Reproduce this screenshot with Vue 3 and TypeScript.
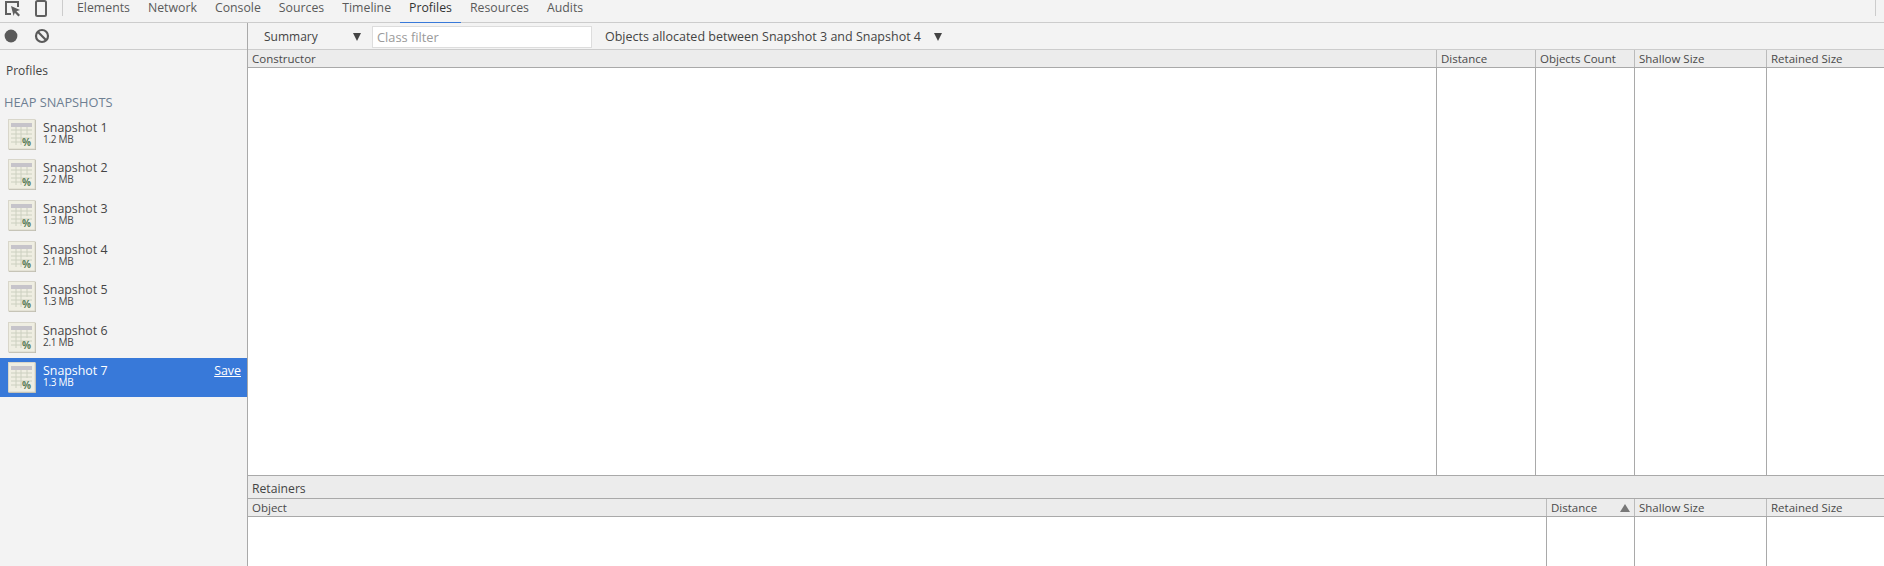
<script setup lang="ts">
const tabs: string[] = ['Elements', 'Network', 'Console', 'Sources', 'Timeline', 'Profiles', 'Resources', 'Audits']
const snapshots = [
  { name: 'Snapshot 1', size: '1.2 MB' },
  { name: 'Snapshot 2', size: '2.2 MB' },
  { name: 'Snapshot 3', size: '1.3 MB' },
  { name: 'Snapshot 4', size: '2.1 MB' },
  { name: 'Snapshot 5', size: '1.3 MB' },
  { name: 'Snapshot 6', size: '2.1 MB' },
  { name: 'Snapshot 7', size: '1.3 MB' },
]
const upperCols: string[] = ['Constructor', 'Distance', 'Objects Count', 'Shallow Size', 'Retained Size']
const lowerCols: string[] = ['Object', 'Distance', 'Shallow Size', 'Retained Size']
</script>

<template>
  <div class="root">
    <header class="topbar">
      <svg class="ico-inspect" width="18" height="18" viewBox="0 0 18 18">
        <path d="M7 14H2V2h12v5" fill="none" stroke="#5f5f5f" stroke-width="2" />
        <path d="M7 6l9 4-3.6 1.2L16 15l-1.6 1.6-3.6-3.8L9.6 16z" fill="#5f5f5f" />
      </svg>
      <svg class="ico-device" width="12" height="17" viewBox="0 0 12 17">
        <rect x="1" y="1" width="10" height="15" rx="1.5" fill="none" stroke="#5f5f5f" stroke-width="2" />
      </svg>
      <span class="vsep"></span>
      <nav class="tabs">
        <span v-for="t in tabs" :key="t" class="tab" :class="{ active: t === 'Profiles' }">{{ t }}</span>
      </nav>
      <span class="end-sep"></span>
    </header>

    <div class="main">
      <aside class="sidebar">
        <div class="side-tools">
          <svg width="14" height="14" viewBox="0 0 14 14"><circle cx="7" cy="7" r="6.4" fill="#5a5a5a" /></svg>
          <svg width="16" height="16" viewBox="0 0 16 16">
            <circle cx="8" cy="8" r="6" fill="none" stroke="#5a5a5a" stroke-width="2.2" />
            <path d="M3.8 3.8l8.4 8.4" stroke="#5a5a5a" stroke-width="2.2" />
          </svg>
        </div>
        <div class="side-title">Profiles</div>
        <div class="side-group">HEAP SNAPSHOTS</div>
        <ul class="snap-list">
          <li v-for="(s, i) in snapshots" :key="s.name" class="snap" :class="{ selected: i === 6 }">
            <svg class="snap-ico" width="28" height="31" viewBox="0 0 28 31">
              <rect x="1" y="1" width="27" height="30" fill="#b5b3a4" />
              <rect x="0.5" y="0.5" width="26.5" height="29.5" fill="#efeee2" stroke="#d8d6ca" />
              <rect x="3" y="4" width="21" height="4" fill="#c6c4ca" />
              <path d="M3 11h21M3 15h21M3 19h21M3 23h11M8 8v18M13 8v18M19 8v8" stroke="#ccd0c0" stroke-width="1" fill="none" />
              <text x="14" y="27" class="pct">%</text>
            </svg>
            <div class="snap-text">
              <div class="snap-name">{{ s.name }}</div>
              <div class="snap-size">{{ s.size }}</div>
            </div>
            <span v-if="i === 6" class="save">Save</span>
          </li>
        </ul>
      </aside>

      <section class="content">
        <div class="filterbar">
          <span class="summary">Summary</span>
          <span class="tri"></span>
          <span class="filter">Class filter</span>
          <span class="objects">Objects allocated between Snapshot 3 and Snapshot 4</span>
          <span class="tri tri2"></span>
        </div>

        <div class="grid upper">
          <div class="row-head cols-upper">
            <span v-for="c in upperCols" :key="c" class="head-cell">{{ c }}</span>
          </div>
          <div class="row-body cols-upper">
            <span v-for="c in upperCols" :key="c" class="body-cell"></span>
          </div>
        </div>

        <div class="retainers">Retainers</div>

        <div class="grid lower">
          <div class="row-head cols-lower">
            <span v-for="c in lowerCols" :key="c" class="head-cell">
              {{ c }}
              <span v-if="c === 'Distance'" class="sort"></span>
            </span>
          </div>
          <div class="row-body cols-lower">
            <span v-for="c in lowerCols" :key="c" class="body-cell"></span>
          </div>
        </div>
      </section>
    </div>
  </div>
</template>

<style scoped>
.root {
  width: 1884px;
  height: 566px;
  overflow: hidden;
  display: flex;
  flex-direction: column;
  background: #f3f3f3;
  color: #444;
  font-family: "Open Sans", "Noto Sans", sans-serif;
  font-size: 12px;
  line-height: 16px;
}
.topbar {
  height: 23px;
  flex: none;
  box-sizing: border-box;
  border-bottom: 1px solid #ccc;
  display: flex;
  align-items: flex-start;
  position: relative;
}
.ico-inspect { margin: 0 0 0 4px; }
.ico-device { margin: 0 0 0 13px; }
.vsep {
  width: 1px;
  height: 16px;
  margin-left: 15px;
  background: #ccc;
}
.tabs {
  display: flex;
  margin-left: 5px;
  height: 22px;
  color: #5a5a5a;
  font-size: 12.3px;
}
.tab {
  padding: 0 9px;
  height: 23px;
  box-sizing: border-box;
  white-space: nowrap;
}
.tab.active {
  color: #333;
  border-bottom: 1px solid #3879d9;
}
.end-sep {
  position: absolute;
  left: 1875px;
  top: 0;
  width: 1px;
  height: 16px;
  background: #ccc;
}
.main {
  flex: 1;
  display: flex;
  min-height: 0;
}
.sidebar {
  width: 248px;
  flex: none;
  box-sizing: border-box;
  border-right: 1px solid #a9a9a9;
}
.side-tools {
  height: 27px;
  box-sizing: border-box;
  border-bottom: 1px solid #ccc;
  display: flex;
  align-items: center;
  gap: 16px;
  padding-left: 4px;
}
.side-title {
  padding: 13px 0 0 6px;
  height: 22px;
  color: #444;
}
.side-group {
  padding: 9px 0 0 4px;
  height: 17px;
  color: #6e7f92;
  font-size: 12.8px;
}
.snap-list {
  list-style: none;
  margin: 3px 0 0;
  padding: 0;
}
.snap {
  height: 40.67px;
  display: flex;
  align-items: center;
  padding: 0 6px 0 8px;
  box-sizing: border-box;
}
.snap.selected {
  height: 39px;
  background: #3879d9;
  color: #fff;
}
.snap-ico { flex: none; }
.pct {
  font-size: 10px;
  font-weight: 700;
  fill: #5b7f5a;
}
.snap-text {
  margin-left: 7px;
  flex: 1;
  margin-top: -4px;
}
.snap-name {
  font-size: 12.4px;
  line-height: 13px;
}
.snap-size {
  font-size: 10px;
  line-height: 10px;
  letter-spacing: -0.3px;
}
.save {
  align-self: flex-start;
  margin-top: 5px;
  font-size: 12.4px;
  text-decoration: underline;
}
.content {
  flex: 1;
  min-width: 0;
  display: flex;
  flex-direction: column;
}
.filterbar {
  height: 27px;
  flex: none;
  box-sizing: border-box;
  border-bottom: 1px solid #ccc;
  display: flex;
  align-items: center;
  padding-top: 2px;
  position: relative;
}
.summary { margin-left: 16px; width: 89px; }
.tri {
  width: 0;
  height: 0;
  border-left: 4.5px solid transparent;
  border-right: 4.5px solid transparent;
  border-top: 8px solid #444;
}
.filter {
  margin-left: 11px;
  width: 220px;
  height: 22px;
  box-sizing: border-box;
  background: #fff;
  border: 1px solid #ddd;
  padding: 2px 4px;
  color: #9a9a9a;
  font-size: 12.8px;
}
.objects {
  margin-left: 13px;
  white-space: nowrap;
  font-size: 12.5px;
}
.tri2 { margin-left: 13px; }
.grid {
  display: flex;
  flex-direction: column;
  background: #fff;
  min-height: 0;
}
.upper { height: 425px; flex: none; }
.lower { flex: 1; }
.cols-upper {
  display: grid;
  grid-template-columns: 1189px 99px 99px 132px 1fr;
}
.cols-lower {
  display: grid;
  grid-template-columns: 1299px 88px 132px 1fr;
}
.row-head {
  height: 18px;
  flex: none;
  box-sizing: border-box;
  background: #ececec;
  border-bottom: 1px solid #a9a9a9;
}
.head-cell {
  box-sizing: border-box;
  border-right: 1px solid #bbb;
  padding: 1px 4px 0;
  position: relative;
  white-space: nowrap;
  color: #4a4a4a;
  font-size: 11.5px;
}
.row-body { flex: 1; min-height: 0; }
.body-cell {
  border-right: 1px solid #a9a9a9;
}
.head-cell:last-child, .body-cell:last-child { border-right: 0; }
.sort {
  position: absolute;
  right: 4px;
  top: 5px;
  width: 0;
  height: 0;
  border-left: 5px solid transparent;
  border-right: 5px solid transparent;
  border-bottom: 8px solid #777;
}
.retainers {
  height: 24px;
  flex: none;
  box-sizing: border-box;
  background: #ececec;
  border-top: 1px solid #a9a9a9;
  border-bottom: 1px solid #a9a9a9;
  padding: 5px 0 0 4px;
  font-size: 12.2px;
}
</style>
